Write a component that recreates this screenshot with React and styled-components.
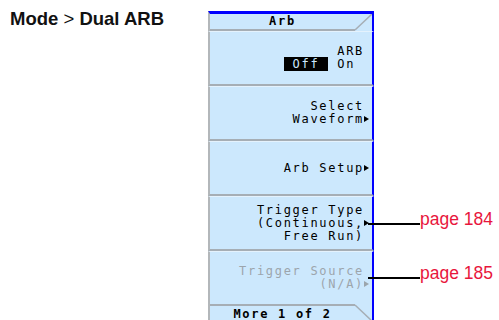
import React from 'react';
import styled, { createGlobalStyle } from 'styled-components';

const PANEL_BG = '#cce8fd';
const SEP = '#a6aeb5';
const HILITE = '#e4f2fd';
const BLUE = '#0000ff';

const GlobalStyle = createGlobalStyle`
  html, body {
    margin: 0;
    padding: 0;
    background: #fff;
  }
`;

const Page = styled.div`
  display: flex;
  width: 499px;
  height: 320px;
  overflow: hidden;
  background: #fff;
`;

const Breadcrumb = styled.div`
  flex: 0 0 208px;
  box-sizing: border-box;
  padding: 8px 0 0 10px;
  font-family: 'Liberation Sans', Arial, sans-serif;
  font-size: 18.5px;
  font-weight: bold;
  color: #111;
  white-space: nowrap;

  span {
    font-weight: normal;
  }
`;

const Panel = styled.div`
  display: flex;
  flex-direction: column;
  padding-top: 11px;
  font-family: 'DejaVu Sans Mono', 'Liberation Mono', monospace;
  font-size: 12px;
  letter-spacing: 1.7px;
  line-height: 13px;
`;

const Row = styled.div`
  display: flex;
  align-items: center;
`;

const Frame = styled.div`
  box-sizing: border-box;
  flex: 0 0 166px;
  width: 166px;
  background: ${PANEL_BG};
  border-left: 2px solid #b3b7ba;
  border-right: 2px solid ${BLUE};
`;

const Header = styled(Frame)`
  display: flex;
  height: 20px;
  border-top: 3px solid ${BLUE};
`;

const BottomTab = styled(Frame)`
  display: flex;
  height: 16px;
`;

const TabTitle = styled.div`
  flex: 1;
  text-align: center;
  font-weight: bold;
  color: #000;
  ${(p) =>
    p.$bottom
      ? `border-top: 2px solid ${SEP}; padding-top: 2px;`
      : `border-bottom: 2px solid ${SEP}; line-height: 15px;`}
`;

const Corner = styled.svg`
  flex: 0 0 17px;
  display: block;
`;

const Key = styled(Frame)`
  height: ${(p) => (p.$last ? 53 : 55)}px;
  border-top: 1px solid ${HILITE};
  border-bottom: ${(p) => (p.$last ? 'none' : `2px solid ${SEP}`)};
  padding-right: 8px;
  display: flex;
  flex-direction: column;
  justify-content: center;
  align-items: flex-end;
  color: ${(p) => (p.$disabled ? '#9ca5ac' : '#000')};
`;

const Line = styled.div`
  white-space: pre;
`;

const Selected = styled.span`
  background: #000;
  color: ${PANEL_BG};
`;

const Arrow = styled.span`
  display: inline-block;
  width: 0;
  height: 0;
  border-left: 5px solid currentColor;
  border-top: 3.5px solid transparent;
  border-bottom: 3.5px solid transparent;
  margin-right: -5px;
  vertical-align: 1px;
  letter-spacing: 0;
`;

const Callout = styled.div`
  display: flex;
  align-items: center;
  margin-left: -6px;
`;

const Leader = styled.div`
  width: 52px;
  height: 2px;
  background: #000;
`;

const PageRef = styled.span`
  font-family: 'Liberation Sans', Arial, sans-serif;
  font-size: 17.5px;
  line-height: 18px;
  letter-spacing: 0;
  color: #e8163c;
  margin-bottom: 9px;
  white-space: nowrap;
`;

const keys = [
  { lines: ['Select', 'Waveform'], arrowAt: 1 },
  { lines: ['Arb Setup'], arrowAt: 0 },
  { lines: ['Trigger Type', '(Continuous,', 'Free Run)'], arrowAt: 1, ref: 'page 184' },
  { lines: ['Trigger Source', '(N/A)'], arrowAt: 1, ref: 'page 185', disabled: true },
];

export default function App() {
  return (
    <Page>
      <GlobalStyle />
      <Breadcrumb>
        Mode <span>&gt;</span> Dual ARB
      </Breadcrumb>
      <Panel>
        <Row>
          <Header>
            <TabTitle>Arb</TabTitle>
            <Corner width="17" height="17" viewBox="0 0 17 17">
              <line x1="0" y1="16" x2="17" y2="0" stroke={SEP} strokeWidth="1.5" />
            </Corner>
          </Header>
        </Row>
        <Row>
          <Key>
            <Line>ARB</Line>
            <Line>
              <Selected> Off </Selected> On{' '}
            </Line>
          </Key>
        </Row>
        {keys.map((k, i) => (
          <Row key={`key-${i}`}>
            <Key $disabled={k.disabled} $last={i === keys.length - 1}>
              {k.lines.map((text, j) => (
                <Line key={`line-${j}`}>
                  {text}
                  {j === k.arrowAt && <Arrow />}
                </Line>
              ))}
            </Key>
            {k.ref && (
              <Callout>
                <Leader />
                <PageRef>{k.ref}</PageRef>
              </Callout>
            )}
          </Row>
        ))}
        <Row>
          <BottomTab>
            <TabTitle $bottom>More 1 of 2</TabTitle>
            <Corner width="17" height="16" viewBox="0 0 17 16">
              <line x1="0" y1="1" x2="17" y2="17" stroke={SEP} strokeWidth="1.5" />
            </Corner>
          </BottomTab>
        </Row>
      </Panel>
    </Page>
  );
}
